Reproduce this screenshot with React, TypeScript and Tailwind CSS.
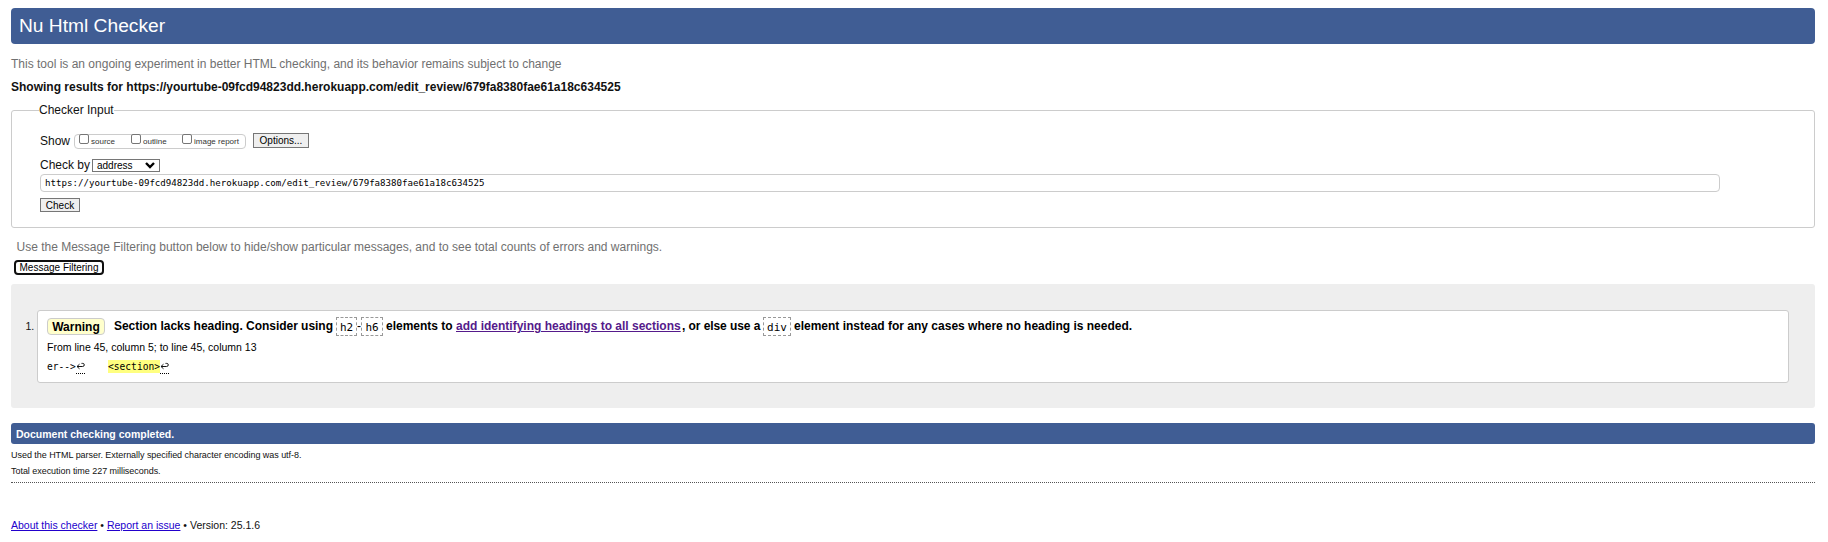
import React from "react";

function Checkbox({ label, className }: { label: string; className: string }) {
  return (
    <label className={`flex items-start ${className}`}>
      <input
        type="checkbox"
        className="-mt-px block size-[10px] shrink-0 appearance-none rounded-[2px] border border-[#767676] bg-white"
      />
      <span className="ml-[2px] mt-px h-[12px] whitespace-nowrap text-[8px] leading-[12px] text-[#333]">{label}</span>
    </label>
  );
}

function Code({ children, className }: { children: string; className: string }) {
  return (
    <code
      className={`flex h-[19px] items-center justify-center border border-dashed border-[#999] pt-[2px] font-['DejaVu_Sans_Mono',monospace] text-[11px] font-normal leading-none ${className}`}
    >
      {children}
    </code>
  );
}

function Return() {
  return (
    <span className="flex h-[14px] w-[9px] justify-center border-b border-dotted border-black">
      <svg viewBox="0 0 9 8" className="mt-[2px] h-[8px] w-[9px]" fill="none" stroke="#111" strokeWidth="1">
        <path d="M1 4.5H6.5Q8.3 4.5 8.3 2.8Q8.3 1.4 6.5 1.4H5.5M3.5 2.2L1 4.5L3.5 6.8" />
      </svg>
    </span>
  );
}

export default function App() {
  return (
    <div className="h-[542px] w-[1828px] overflow-hidden bg-white pl-[11px] pr-[13px] pt-[8px] font-['Liberation_Sans',Arial,sans-serif] text-[12px] text-[#111]">
      <h1 className="flex h-[36px] items-center rounded-[4px] bg-[#405d94] pb-px pl-[8px] text-[19.2px] leading-none text-white">
        Nu Html Checker
      </h1>
      <p className="mt-[12px] h-[16px] whitespace-nowrap leading-[16px] text-[#707070]">
        This tool is an ongoing experiment in better HTML checking, and its behavior remains subject to change
      </p>
      <h2 className="mt-[7px] h-[16px] whitespace-nowrap font-bold leading-[16px]">
        Showing results for https://yourtube-09fcd94823dd.herokuapp.com/edit_review/679fa8380fae61a18c634525
      </h2>
      <form className="mt-[15px] h-[118px] rounded-[3px] border border-[#ccc] pl-[28px]">
        <div className="-ml-px -mt-[9px] h-[16px] w-[75px] whitespace-nowrap bg-white leading-[16px]">Checker Input</div>
        <div className="mt-[15px] flex h-[17px]">
          <span className="w-[34px] leading-[16px]">Show</span>
          <div className="mt-px flex h-[15px] w-[172px] rounded-[4px] border border-[#ccc] pl-[4px]">
            <Checkbox label="source" className="w-[52px]" />
            <Checkbox label="outline" className="w-[51px]" />
            <Checkbox label="image report" className="w-[60px]" />
          </div>
          <button type="button" className="ml-[7px] flex h-[15px] w-[56px] items-center justify-center border border-[#767676] bg-[#efefef] text-[10px] leading-none text-black">
            Options...
          </button>
        </div>
        <div className="mt-[7px] flex h-[17px]">
          <span className="w-[52px] whitespace-nowrap leading-[16px]">Check by</span>
          <button type="button" className="mt-[2px] flex h-[13px] w-[68px] items-center justify-between border border-[#767676] bg-white pl-[4px] pr-[4px] text-[10px] leading-none text-black">
            address
            <svg viewBox="0 0 10 7" className="h-[7px] w-[10px]" fill="none" stroke="black" strokeWidth="2.4">
              <path d="M1 1L5 5L9 1" />
            </svg>
          </button>
        </div>
        <input
          readOnly
          value="https://yourtube-09fcd94823dd.herokuapp.com/edit_review/679fa8380fae61a18c634525"
          className="block h-[18px] w-[1680px] rounded-[4px] border border-[#ccc] bg-white px-[4px] pb-px font-['DejaVu_Sans_Mono',monospace] text-[9.14px] text-black"
        />
        <button type="button" className="mt-[6px] flex h-[14px] w-[40px] items-center justify-center border border-[#767676] bg-[#efefef] pt-px text-[10px] leading-none text-black">
          Check
        </button>
      </form>
      <p className="mt-[11px] h-[16px] whitespace-nowrap pl-[5.5px] leading-[16px] text-[#707070]">
        Use the Message Filtering button below to hide/show particular messages, and to see total counts of errors and warnings.
      </p>
      <button type="button" className="ml-[3px] mt-[5px] flex h-[15px] w-[90px] items-center justify-center rounded-[4px] border-2 border-[#101010] bg-white text-[10px] leading-none text-black">
        Message Filtering
      </button>
      <ol className="mt-[9px] flex h-[124px] rounded-[3px] bg-[#eee] pt-[26px]">
        <li className="flex">
          <span className="w-[26px] pl-[14.5px] pt-[8px] text-[10.5px] leading-[16px] text-[#111]">1.</span>
          <div className="h-[73px] w-[1752px] rounded-[3px] border border-[#ccc] bg-white pl-[9px] pt-[6px] text-black">
            <div className="flex h-[20px] whitespace-nowrap font-bold leading-[18px]">
              <span className="mt-px flex h-[17px] w-[58px] items-center justify-center rounded-[4px] border border-[#ccc] bg-[#ffffcc]">Warning</span>
              <span className="ml-[9px] w-[222px] tracking-[-0.03px]">Section lacks heading. Consider using</span>
              <Code className="w-[21px]">h2</Code>
              <span className="w-[4px] overflow-hidden font-normal">-</span>
              <Code className="w-[22px]">h6</Code>
              <span className="ml-[3px] w-[70px]">elements to</span>
              <a className="w-[226px] text-[#551a8b] underline">add identifying headings to all sections</a>
              <span className="w-[81px] tracking-[-0.07px]">, or else use a</span>
              <Code className="w-[28px]">div</Code>
              <span className="ml-[3px]">element instead for any cases where no heading is needed.</span>
            </div>
            <p className="mt-[2px] h-[16px] whitespace-nowrap text-[10.5px] leading-[16px]">From line 45, column 5; to line 45, column 13</p>
            <div className="mt-[5px] flex h-[15px] font-['DejaVu_Sans_Mono',monospace] text-[9.6px] leading-[13px]">
              <code className="w-[29px] font-['DejaVu_Sans_Mono',monospace]">er--&gt;</code>
              <Return />
              <code className="ml-[23px] h-[13px] w-[52px] bg-[#ffff80] font-['DejaVu_Sans_Mono',monospace]">&lt;section&gt;</code>
              <Return />
            </div>
          </div>
        </li>
      </ol>
      <p className="mt-[15px] flex h-[21px] items-center rounded-[3px] bg-[#405d94] pl-[5px] pt-px text-[10.5px] font-bold leading-none text-white">
        Document checking completed.
      </p>
      <p className="mt-[3px] h-[16px] whitespace-nowrap text-[9px] leading-[16px] tracking-[-0.04px]">Used the HTML parser. Externally specified character encoding was utf-8.</p>
      <p className="h-[16px] whitespace-nowrap text-[9px] leading-[16px] tracking-[-0.04px]">Total execution time 227 milliseconds.</p>
      <div className="mt-[3px] border-b border-dotted border-[#555]" />
      <footer className="mt-[34px] h-[16px] whitespace-nowrap text-[10.5px] leading-[16px]">
        <a className="text-[#2200cc] underline">About this checker</a> • <a className="text-[#2200cc] underline">Report an issue</a> • Version: 25.1.6
      </footer>
    </div>
  );
}
